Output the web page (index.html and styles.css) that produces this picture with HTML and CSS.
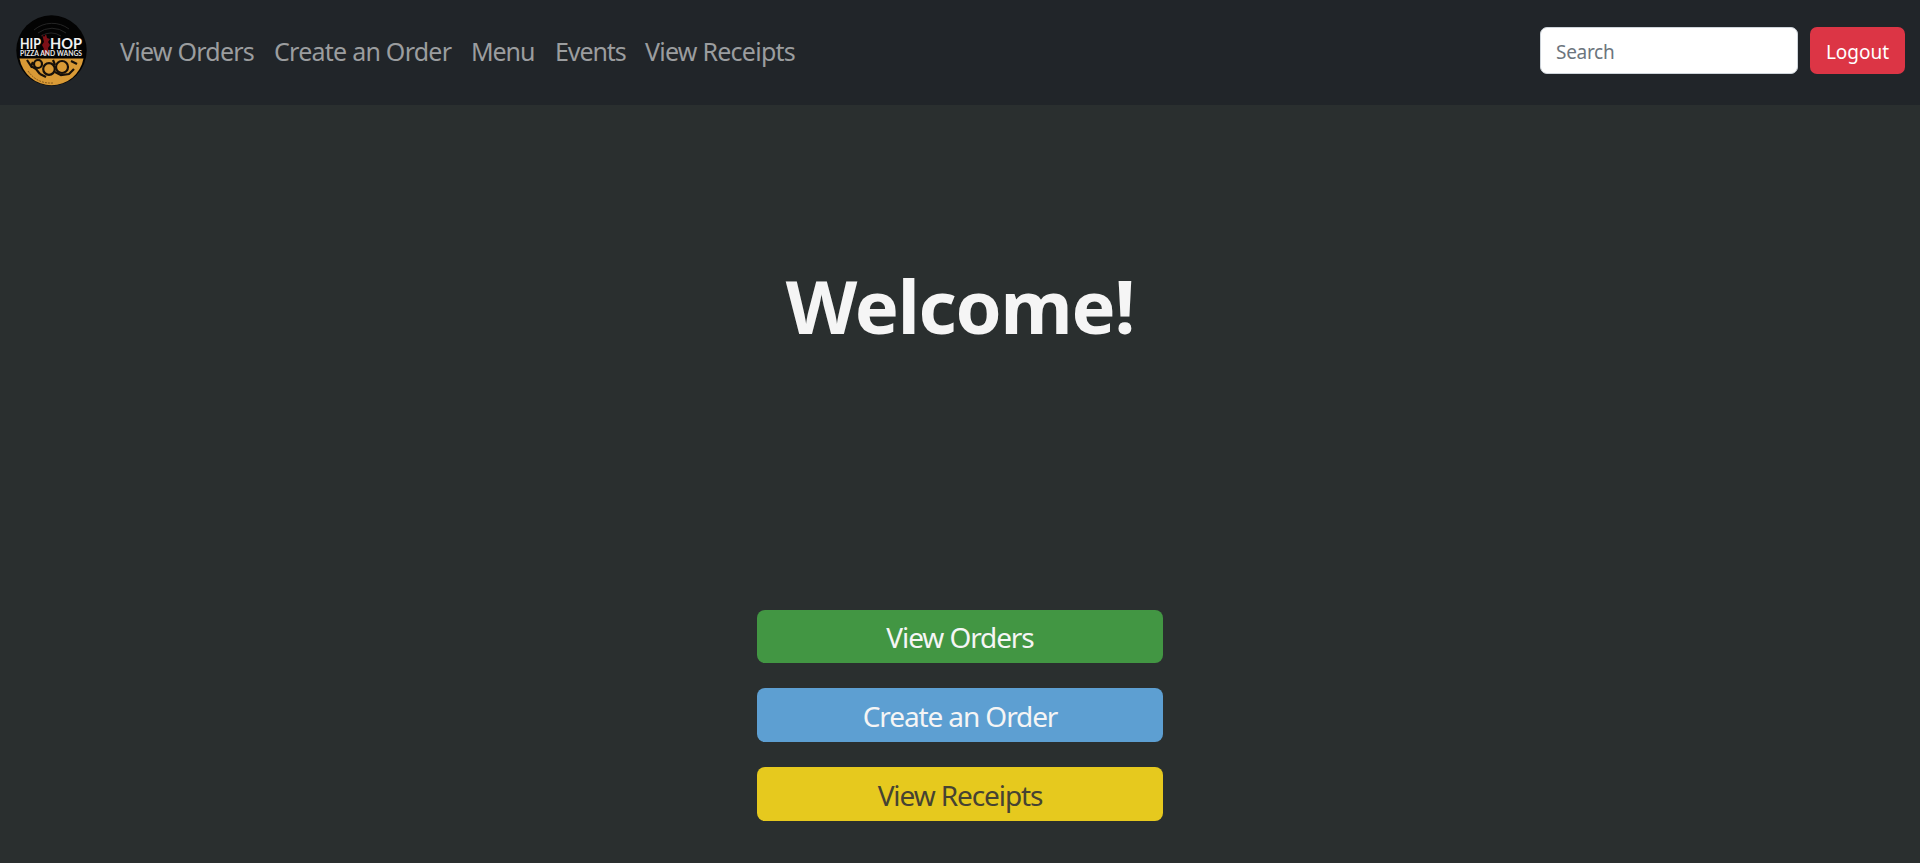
FILE: index.html
```html
<!DOCTYPE html>
<html lang="en">
<head>
<meta charset="utf-8">
<title>Hip Hop Pizza and Wangs</title>
<link rel="stylesheet" href="styles.css">
</head>
<body>
<nav class="navbar">
  <a class="brand" href="#">
    <svg width="72" height="72" viewBox="0 0 72 72">
      <defs><clipPath id="slice"><path d="M3.500 43.500H67.500A32.500 32.500 0 0 1 3.500 43.500Z"/></clipPath></defs>
      <circle cx="35.500" cy="35.500" r="35.200" fill="#030303"/>
      <g fill="none" stroke="#242424" stroke-width="1">
        <path d="M18 15a28 28 0 0 1 35-1M22 18a23 23 0 0 1 28 0M25 21a18 18 0 0 1 20 0"/>
      </g>
      <g clip-path="url(#slice)">
        <rect y="43" width="72" height="29" fill="#d99a36"/>
        <path d="M11 45l4 6 2-4M15 51l5 3 4 5M23 45l3 3M37 45l2 5M39 57l6 3 8-1 5-5M55 46l6 3M24 59l6 3" fill="none" stroke="#17100a" stroke-width="2.200"/>
        <g fill="#d99a36" stroke="#17100a" stroke-width="2.200">
          <circle cx="22" cy="49" r="4"/><circle cx="33" cy="54" r="5.800"/><circle cx="46" cy="52" r="6"/>
        </g>
        <path d="M12 56q9 13 25 12" fill="none" stroke="#845719" stroke-width="1" stroke-dasharray="2 1"/>
      </g>
      <path d="M26 19l2 3 2-3 1 4 3 1-2 3 2 3-2 3 1 5-4 3-3-4 2-3-2-4 2-3z" fill="#7d1017"/>
      <text class="logo-title" x="4" y="34" textLength="21" lengthAdjust="spacingAndGlyphs">HIP</text>
      <text class="logo-title" x="34" y="34" textLength="32" lengthAdjust="spacingAndGlyphs">HOP</text>
      <text class="logo-sub" x="4" y="41" textLength="62" lengthAdjust="spacingAndGlyphs">PIZZA AND WANGS</text>
    </svg>
  </a>
  <div class="links">
    <a href="#">View Orders</a><a href="#">Create an Order</a><a class="short" href="#">Menu</a><a class="short" href="#">Events</a><a href="#">View Receipts</a>
  </div>
  <form class="tools">
    <input class="search" type="search" placeholder="Search">
    <button class="logout" type="button">Logout</button>
  </form>
</nav>
<main class="home">
  <h1 class="welcome">Welcome!</h1>
  <div class="actions">
    <button class="action orders">View Orders</button>
    <button class="action create">Create an Order</button>
    <button class="action receipts">View Receipts</button>
  </div>
</main>
</body>
</html>
```
FILE: styles.css
```css
* { box-sizing: border-box; }
body {
  margin: 0;
  height: 863px;
  overflow: hidden;
  background: #2a2f2f;
  font-family: "Noto Sans", sans-serif;
}
.navbar {
  display: flex;
  height: 105px;
  padding: 0 15px 0 16px;
  background: #212529;
}
.brand { width: 72px; height: 72px; margin-top: 15px; }
.brand svg { display: block; }
.logo-title { font: 700 16px Lato, sans-serif; fill: #f1f1f1; }
.logo-sub { font: 700 6.500px Lato, sans-serif; fill: #e8e8e8; }
.links {
  display: grid;
  grid-template-columns: 154px 197px 84px 90px 160px;
  margin: 33px 0 0 32px;
  height: 36px;
}
.links a {
  color: #9b9d9f;
  font-size: 25px;
  line-height: 36px;
  letter-spacing: -0.750px;
  text-decoration: none;
  white-space: nowrap;
}
.links .short { letter-spacing: -1.100px; }
.tools { display: flex; gap: 12px; margin: 27px 0 0 auto; }
.search {
  width: 258px;
  height: 47px;
  padding: 2px 15px 0;
  border: 1px solid #ced4da;
  border-radius: 7px;
  background: #fff;
  font: 19px "Noto Sans", sans-serif;
  letter-spacing: -0.300px;
}
.search::placeholder { color: #6c757d; opacity: 1; }
.logout {
  width: 95px;
  height: 47px;
  padding: 2px 0 0;
  border: 0;
  border-radius: 7px;
  background: #dc3545;
  color: #fff;
  font: 19px "Noto Sans", sans-serif;
}
.home { display: flex; flex-direction: column; align-items: center; }
.welcome {
  margin: 151px 0 0;
  color: #f5f5f5;
  font-size: 74px;
  font-weight: 700;
  line-height: 100px;
  letter-spacing: -1.200px;
}
.actions { display: flex; flex-direction: column; gap: 25px; margin-top: 254px; width: 406px; }
.action {
  height: 54px;
  padding: 1px 0 0;
  border: 0;
  border-radius: 8px;
  color: #f5f5f5;
  font: 28px "Noto Sans", sans-serif;
  letter-spacing: -1.100px;
}
.orders { background: #429643; height: 53px; }
.create { background: #5d9fd2; }
.receipts { background: #e6c91e; color: #464332; }
```
